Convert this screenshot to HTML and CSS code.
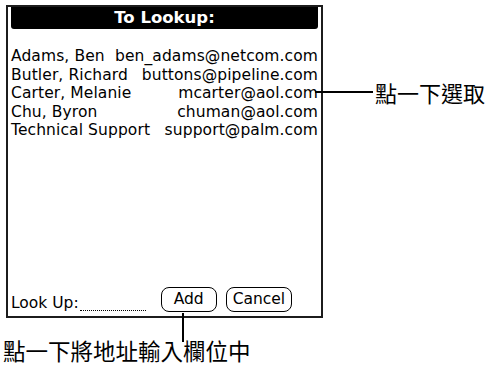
FILE: index.html
```html
<!DOCTYPE html>
<html>
<head>
<meta charset="utf-8">
<link rel="stylesheet" href="styles.css">
</head>
<body>
<div class="page">
  <div class="screen">
    <div class="title">To Lookup:</div>
    <ul class="list">
      <li class="row"><span>Adams, Ben</span><span>ben_adams@netcom.com</span></li>
      <li class="row"><span>Butler, Richard</span><span>buttons@pipeline.com</span></li>
      <li class="row"><span>Carter, Melanie</span><span>mcarter@aol.com</span></li>
      <li class="row"><span>Chu, Byron</span><span>chuman@aol.com</span></li>
      <li class="row"><span>Technical Support</span><span>support@palm.com</span></li>
    </ul>
    <div class="bottom">
      <span class="label">Look Up:</span>
      <span class="field"></span>
      <span class="btn btn-add">Add</span>
      <span class="btn">Cancel</span>
    </div>
  </div>
  <div class="callout-right"><span class="hline"></span><span class="ctext">點一下選取</span></div>
  <div class="vline"></div>
  <div class="caption">點一下將地址輸入欄位中</div>
</div>
</body>
</html>
```

FILE: styles.css
```css
html, body {
  margin: 0;
  padding: 0;
  background: #fff;
}
.page {
  position: relative;
  width: 486px;
  height: 367px;
  overflow: hidden;
  font-family: "DejaVu Sans", sans-serif;
  color: #000;
}
.screen {
  margin: 5px 0 0 6px;
  width: 313px;
  height: 309px;
  border: 2px solid #1c1c1c;
  display: flex;
  flex-direction: column;
}
.title {
  margin: 0 3px;
  height: 22px;
  background: #000;
  color: #fff;
  font-weight: bold;
  font-size: 16.5px;
  line-height: 22px;
  text-align: center;
  border-radius: 0 0 3px 3px;
}
.list {
  list-style: none;
  margin: 0;
  padding: 18px 3px 0 3px;
  flex: 1;
  font-size: 15.5px;
  letter-spacing: 0.1px;
}
.row {
  display: flex;
  justify-content: space-between;
  height: 18.5px;
  line-height: 18.5px;
}
.bottom {
  display: flex;
  align-items: flex-end;
  padding: 0 0 4px 3px;
  font-size: 15.5px;
}
.label {
  line-height: 18px;
}
.field {
  width: 66px;
  height: 16px;
  border-bottom: 1px dotted #000;
  margin: 0 15px 1px 1px;
}
.btn {
  border: 1.5px solid #000;
  border-radius: 8px;
  height: 23px;
  line-height: 23px;
  padding: 0 6px;
  margin-right: 9px;
}
.btn-add {
  padding: 0 12px;
}
.callout-right {
  position: absolute;
  left: 315px;
  top: 80px;
  display: flex;
  align-items: center;
}
.hline {
  width: 58px;
  height: 2px;
  background: #000;
}
.ctext {
  margin-left: 2px;
  font-family: "Noto Sans CJK TC", sans-serif;
  font-size: 22px;
  line-height: 24px;
}
.vline {
  position: absolute;
  left: 182px;
  top: 313px;
  width: 2px;
  height: 29px;
  background: #000;
}
.caption {
  margin: 18px 0 0 3px;
  font-family: "Noto Sans CJK TC", sans-serif;
  font-size: 22.5px;
  line-height: 28px;
}
```
